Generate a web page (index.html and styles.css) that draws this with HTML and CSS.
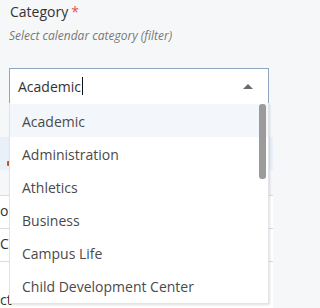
FILE: index.html
```html
<!DOCTYPE html>
<html>
<head>
<meta charset="utf-8">
<link rel="stylesheet" href="styles.css">
</head>
<body>
<div class="page">
  <div class="field">
    <div class="label">Category<span class="req">*</span></div>
    <div class="hint">Select calendar category (filter)</div>
    <div class="select">
      <div class="input"><span class="value">Academic</span><span class="caret"></span><span class="arrow"></span></div>
      <ul class="menu">
        <li class="item active">Academic</li>
        <li class="item">Administration</li>
        <li class="item">Athletics</li>
        <li class="item">Business</li>
        <li class="item">Campus Life</li>
        <li class="item">Child Development Center</li>
        <li class="thumb"></li>
      </ul>
    </div>
  </div>
  <div class="behind">
    <div class="band"><span class="mark"></span></div>
    <div class="gap"></div>
    <div class="row">on</div>
    <div class="row">Ca</div>
    <div class="row tall">ct</div>
  </div>
</div>
</body>
</html>
```
FILE: styles.css
```css
html, body {
  margin: 0;
  padding: 0;
  overflow: hidden;
}
html {
  height: 308px;
}
body {
  background: #f6f7f9;
  font-family: "Open Sans", "Noto Sans", sans-serif;
  width: 273px;
  height: 308px;
}
.page {
  position: relative;
}
.field {
  padding: 2px 5px 0 9px;
}
.label {
  font-size: 14px;
  line-height: 20px;
  color: #333;
  padding-left: 1px;
}
.req {
  color: #e2534b;
  margin-left: 3px;
}
.hint {
  font-size: 12px;
  font-style: italic;
  color: #777;
  line-height: 14px;
  margin-top: 7px;
}
.select {
  position: relative;
  margin-top: 25px;
  width: 260px;
}
.input {
  box-sizing: border-box;
  height: 36px;
  background: #fff;
  border: 1px solid #8ea6bf;
  border-bottom-color: #c5d2df;
  display: flex;
  align-items: center;
  padding-left: 8px;
  font-size: 14px;
  color: #333;
  position: relative;
}
.caret {
  display: inline-block;
  width: 1px;
  height: 18px;
  background: #111;
  margin-left: 1px;
}
.arrow {
  position: absolute;
  right: 15px;
  top: 15px;
  width: 0;
  height: 0;
  border-left: 5px solid transparent;
  border-right: 5px solid transparent;
  border-bottom: 5px solid #6a6a6a;
}
.menu {
  position: absolute;
  top: 35px;
  left: 0;
  z-index: 2;
  margin: 0;
  padding: 1px 0 1px 0;
  list-style: none;
  width: 260px;
  box-sizing: border-box;
  background: #fff;
  border: 1px solid #e1e4e8;
  border-top: none;
  box-shadow: 1px 1px 2px rgba(0,0,0,0.12);
}
.item {
  height: 33px;
  line-height: 35px;
  padding-left: 12px;
  font-size: 14px;
  color: #4a4a4a;
}
.item.active {
  background: #f3f7fb;
}
.thumb {
  position: absolute;
  right: 2px;
  top: 1px;
  width: 7px;
  height: 75px;
  border-radius: 3px;
  background: #9b9b9b;
}
.behind {
  margin-top: 33px;
  font-size: 14px;
  color: #333;
}
.band {
  height: 33px;
  background: #eaf0f7;
  position: relative;
}
.mark {
  position: absolute;
  left: 7px;
  top: 24px;
  width: 3px;
  height: 5px;
  border-radius: 1px;
  background: #c2581a;
}
.gap {
  height: 25px;
  border-bottom: 1px solid #d9dde2;
}
.row {
  background: #fff;
  height: 32px;
  line-height: 30px;
  border-bottom: 1px solid #d9dde2;
  white-space: nowrap;
}
.row.tall {
  height: 60px;
  line-height: 76px;
}
```
